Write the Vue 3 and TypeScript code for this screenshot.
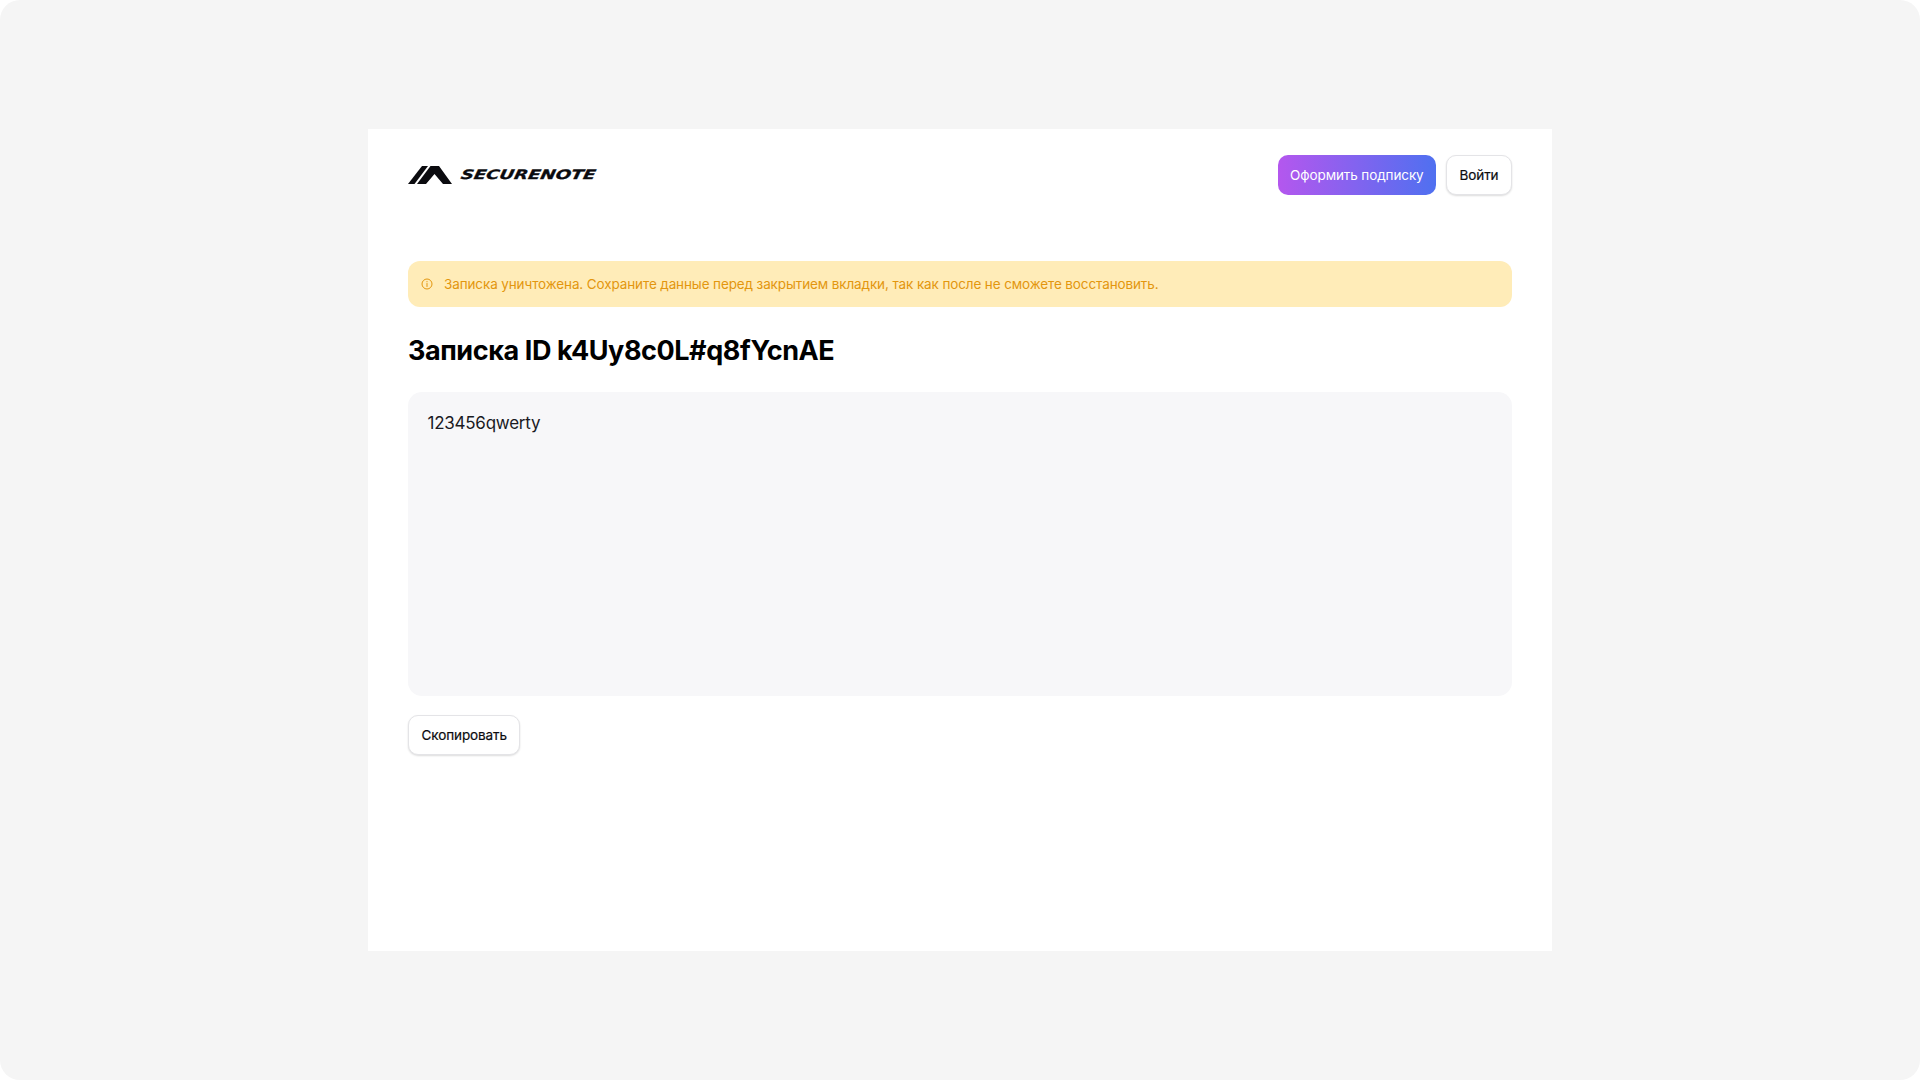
<template>
  <div class="page">
    <main class="card">
      <header class="header">
        <a class="logo">
          <svg class="logo-mark" viewBox="0 0 44 18" width="44" height="18">
            <path d="M0 18 L14 0 H20 L6.5 18 Z" fill="#0b0b0f" />
            <path d="M9 18 L22.5 0 H31 L44 18 H35 L26.5 8 L18 18 Z" fill="#0b0b0f" />
          </svg>
          <span class="logo-text">SECURENOTE</span>
        </a>
        <div class="actions">
          <button class="btn btn-primary">Оформить подписку</button>
          <button class="btn">Войти</button>
        </div>
      </header>

      <div class="alert">
        <svg class="alert-icon" viewBox="0 0 12 12" width="12" height="12" fill="none">
          <circle cx="6" cy="6" r="5" stroke="#e3960e" stroke-width="1" />
          <path d="M6 5.5V8.5" stroke="#e3960e" stroke-width="1" stroke-linecap="round" />
          <circle cx="6" cy="3.7" r="0.6" fill="#e3960e" />
        </svg>
        <span>{{ alertText }}</span>
      </div>

      <h1 class="title">Записка ID {{ noteId }}</h1>

      <div class="note">{{ noteBody }}</div>

      <button class="btn copy">Скопировать</button>
    </main>
  </div>
</template>

<script setup lang="ts">
const noteId = 'k4Uy8c0L#q8fYcnAE';
const noteBody = '123456qwerty';
const alertText =
  'Записка уничтожена. Сохраните данные перед закрытием вкладки, так как после не сможете восстановить.';
</script>

<style>
html,
body {
  margin: 0;
  background: #fff;
}
</style>

<style scoped>
.page {
  box-sizing: border-box;
  width: 1920px;
  height: 1080px;
  padding-top: 129px;
  background: #f5f5f5;
  border-radius: 20px;
  font-family: Inter, 'Liberation Sans', sans-serif;
  color: #0b0b0f;
}

.card {
  box-sizing: border-box;
  width: 1184px;
  height: 822px;
  margin: 0 auto;
  padding: 26px 40px 0;
  background: #fff;
}

.header {
  display: flex;
  align-items: center;
  justify-content: space-between;
  height: 40px;
}

.logo {
  display: flex;
  align-items: center;
  gap: 9px;
}

.logo-mark {
  display: block;
}

.logo-text {
  font-family: 'DejaVu Sans', sans-serif;
  font-size: 13px;
  font-weight: 700;
  font-style: italic;
  line-height: 18px;
  -webkit-text-stroke: 0.3px #0b0b0f;
  transform: scaleX(1.39) skewX(-8deg);
  transform-origin: left center;
}

.actions {
  display: flex;
  gap: 10px;
}

.btn {
  box-sizing: border-box;
  height: 40px;
  padding: 0 12.5px;
  border: 1px solid #e4e4e7;
  border-radius: 10px;
  background: #fff;
  box-shadow: 0 1px 2px rgba(0, 0, 0, 0.14);
  font-family: inherit;
  font-size: 13.5px;
  letter-spacing: -0.1px;
  font-weight: 400;
  -webkit-text-stroke: 0.2px #0b0b0f;
  color: #0b0b0f;
}

.btn-primary {
  border: 0;
  background: linear-gradient(90deg, #b457ee, #4f70f0);
  box-shadow: none;
  -webkit-text-stroke: 0;
  color: #fff;
}

.alert {
  display: flex;
  align-items: center;
  gap: 11px;
  height: 46px;
  margin-top: 66px;
  padding: 0 13px;
  background: #ffecb8;
  border-radius: 12px;
  font-size: 13.5px;
  letter-spacing: -0.12px;
  color: #e3960e;
}

.title {
  margin: 27px 0 0;
  font-size: 27px;
  letter-spacing: -0.43px;
  line-height: 34px;
  font-weight: 700;
  color: #000;
}

.note {
  box-sizing: border-box;
  height: 304px;
  margin-top: 24px;
  padding: 19px 19.5px;
  background: #f7f7f9;
  border-radius: 14px;
  font-size: 17px;
  letter-spacing: -0.25px;
  line-height: 24px;
  color: #1a1a1f;
}

.copy {
  display: block;
  margin-top: 19px;
}
</style>
